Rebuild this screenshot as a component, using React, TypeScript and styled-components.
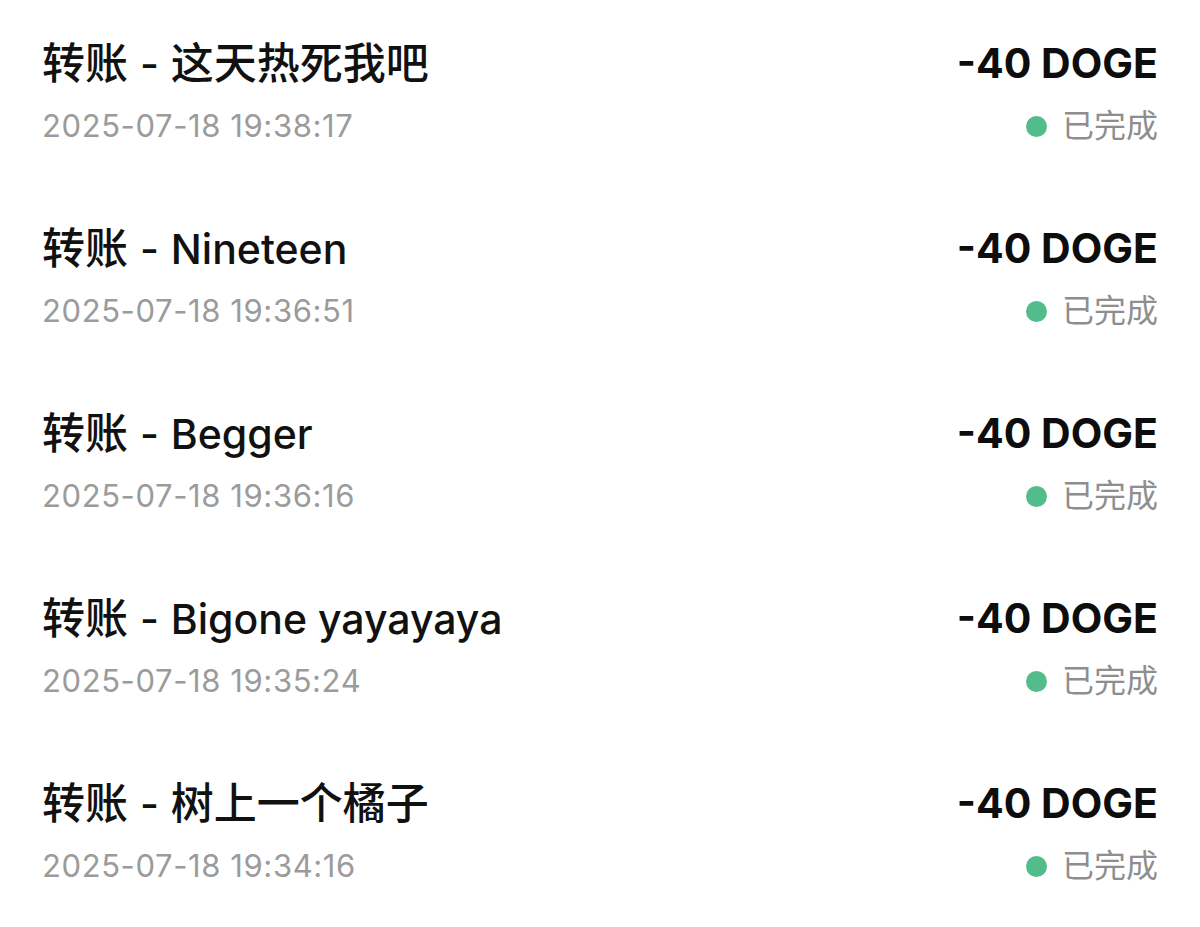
import React from "react";
import styled, { createGlobalStyle } from "styled-components";

const GlobalStyle = createGlobalStyle`
  html, body { margin: 0; padding: 0; background: #ffffff; }
  body {
    font-family: Inter, "Noto Sans CJK SC", "Noto Sans", sans-serif;
    -webkit-font-smoothing: antialiased;
  }
`;

const List = styled.div`
  display: flex;
  flex-direction: column;
  gap: 76px;
  padding: 37px 42px 0;
  box-sizing: border-box;
  width: 1200px;
`;

const Row = styled.div`
  display: grid;
  grid-template-columns: 1fr auto;
  grid-template-rows: 52px 40px;
  row-gap: 17px;
  align-items: center;
`;

const Title = styled.div`
  font-size: 41px;
  font-weight: 500;
  color: #111111;
  line-height: 52px;
  white-space: nowrap;
`;

const Han = styled.span`
  font-size: 43px;
`;

const Dash = styled.span`
  margin: 0 1px;
`;

const Amount = styled.div`
  font-size: 41px;
  font-weight: 700;
  color: #0d0d0d;
  line-height: 52px;
  text-align: right;
`;

const DateText = styled.div`
  font-size: 31px;
  font-weight: 400;
  color: #9b9b9b;
  line-height: 40px;
  letter-spacing: 0.6px;
`;

const Status = styled.div`
  display: flex;
  align-items: center;
  justify-content: flex-end;
  gap: 15px;
  font-size: 32px;
  color: #8e8e8e;
  line-height: 40px;
`;

const Dot = styled.span`
  width: 21px;
  height: 21px;
  border-radius: 50%;
  background: #52bd8b;
  display: inline-block;
`;

const items = [
  { name: "这天热死我吧", cjk: true, time: "2025-07-18 19:38:17" },
  { name: "Nineteen", cjk: false, time: "2025-07-18 19:36:51" },
  { name: "Begger", cjk: false, time: "2025-07-18 19:36:16" },
  { name: "Bigone yayayaya", cjk: false, time: "2025-07-18 19:35:24" },
  { name: "树上一个橘子", cjk: true, time: "2025-07-18 19:34:16" },
];

export default function App() {
  return (
    <>
      <GlobalStyle />
      <List>
        {items.map((it) => (
          <Row key={it.time}>
            <Title>
              <Han>转账</Han> <Dash>-</Dash> {it.cjk ? <Han>{it.name}</Han> : it.name}
            </Title>
            <Amount>-40 DOGE</Amount>
            <DateText>{it.time}</DateText>
            <Status>
              <Dot />
              已完成
            </Status>
          </Row>
        ))}
      </List>
    </>
  );
}
